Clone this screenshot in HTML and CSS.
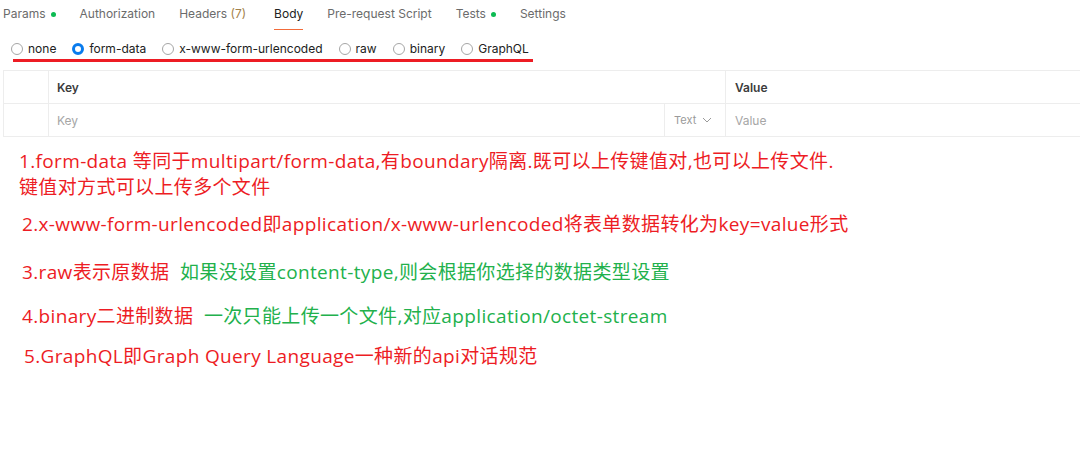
FILE: index.html
```html
<!DOCTYPE html>
<html>
<head>
<meta charset="utf-8">
<link rel="stylesheet" href="styles.css">
</head>
<body>
<div class="page">
  <nav class="tabs">
    <span class="tab">Params<i class="dot"></i></span>
    <span class="tab">Authorization</span>
    <span class="tab wide">Headers <span class="count">(7)</span></span>
    <span class="tab active">Body</span>
    <span class="tab">Pre-request Script</span>
    <span class="tab">Tests<i class="dot"></i></span>
    <span class="tab">Settings</span>
  </nav>
  <div class="modes">
    <label class="mode"><span class="radio"></span>none</label>
    <label class="mode"><span class="radio on"></span>form-data</label>
    <label class="mode"><span class="radio"></span>x-www-form-urlencoded</label>
    <label class="mode"><span class="radio"></span>raw</label>
    <label class="mode"><span class="radio"></span>binary</label>
    <label class="mode"><span class="radio"></span>GraphQL</label>
  </div>
  <div class="mark"></div>
  <div class="table">
    <div class="row head">
      <div class="c-check"></div>
      <div class="c-key">Key</div>
      <div class="c-value">Value</div>
    </div>
    <div class="row">
      <div class="c-check"></div>
      <div class="c-key ph">Key</div>
      <div class="c-type">Text <svg width="10" height="6" viewBox="0 0 10 6"><path d="M1 1l4 4 4-4" fill="none" stroke="#9a9a9a" stroke-width="1"/></svg></div>
      <div class="c-value ph">Value</div>
    </div>
  </div>
  <div class="notes">
    <p class="n1 red">1.form-data 等同于multipart/form-data,有boundary隔离.既可以上传键值对,也可以上传文件.<br>键值对方式可以上传多个文件</p>
    <p class="n2 red">2.x-www-form-urlencoded即application/x-www-urlencoded将表单数据转化为key=value形式</p>
    <p class="n3"><span class="red">3.raw表示原数据</span>&nbsp; <span class="green">如果没设置content-type,则会根据你选择的数据类型设置</span></p>
    <p class="n4"><span class="red">4.binary二进制数据</span>&nbsp; <span class="green">一次只能上传一个文件,对应application/octet-stream</span></p>
    <p class="n5 red">5.GraphQL即Graph Query Language一种新的api对话规范</p>
  </div>
</div>
</body>
</html>
```

FILE: styles.css
```css
* { box-sizing: border-box; }
html, body { margin: 0; padding: 0; background: #fff; }
body { width: 1080px; height: 460px; overflow: hidden; font-family: Inter, "Noto Sans", sans-serif; }

.tabs {
  display: flex;
  height: 31px;
  padding-left: 3px;
}
.tab {
  position: relative;
  font-size: 12px;
  color: #6b6b6b;
  line-height: 28px;
  height: 31px;
  padding-bottom: 3px;
  margin-right: 24px;
  display: flex;
  align-items: center;
  white-space: pre;
}
.tab.wide { margin-right: 28px; }
.tab.active { color: #212121; }
.tab.active::after {
  content: "";
  position: absolute;
  left: 0; right: 0; bottom: 1px;
  height: 1px;
  background: #f26b3a;
}
.count { color: #a3814a; }
.dot {
  display: inline-block;
  width: 5px; height: 5px;
  border-radius: 50%;
  background: #0cbb52;
  margin-left: 5px;
}

.modes {
  display: flex;
  align-items: center;
  height: 28px;
  padding-left: 11px;
  padding-top: 7px;
}
.mode {
  display: flex;
  align-items: center;
  font-size: 12px;
  color: #212121;
  margin-right: 16px;
}
.radio {
  width: 12px; height: 12px;
  border-radius: 50%;
  border: 1px solid #a6a6a6;
  margin-right: 5px;
  background: #fff;
}
.radio.on { border: 3px solid #097bed; }

.mark {
  margin-left: 13px;
  width: 520px;
  height: 3px;
  background: #ed1c24;
}

.table {
  margin: 8px 0 0 3px;
  border-top: 1px solid #ededed;
  border-left: 1px solid #ededed;
}
.row {
  display: flex;
  height: 33px;
  border-bottom: 1px solid #ededed;
  font-size: 12px;
}
.c-check { width: 45px; border-right: 1px solid #ededed; }
.c-key {
  flex: 0 0 677px;
  padding-left: 8px;
  display: flex; align-items: center;
  border-right: 1px solid #ededed;
}
.row .c-key.ph { flex-basis: 616px; }
.c-type {
  flex: 0 0 61px;
  border-right: 1px solid #ededed;
  display: flex; align-items: center;
  padding-left: 9px;
  font-size: 11px;
  color: #9a9a9a;
  gap: 6px;
}
.c-value { flex: 1; padding-left: 9px; display: flex; align-items: center; }
.head .c-key, .head .c-value { font-weight: 600; color: #3c3c3c; }
.ph { color: #a6a6a6; }

.notes { font-family: "Open Sans", "Noto Sans CJK SC", sans-serif; font-size: 19px; letter-spacing: 0.35px; }
.notes p { margin: 0; white-space: nowrap; line-height: 26px; }
.red { color: #ed1c24; }
.green { color: #22b14c; }
.n1 { padding-left: 19px; margin-top: 11px !important; }
.n2 { padding-left: 22px; margin-top: 11px !important; }
.n3 { padding-left: 22px; margin-top: 22px !important; }
.n4 { padding-left: 22px; margin-top: 18px !important; }
.n5 { padding-left: 24px; margin-top: 14px !important; }
```
